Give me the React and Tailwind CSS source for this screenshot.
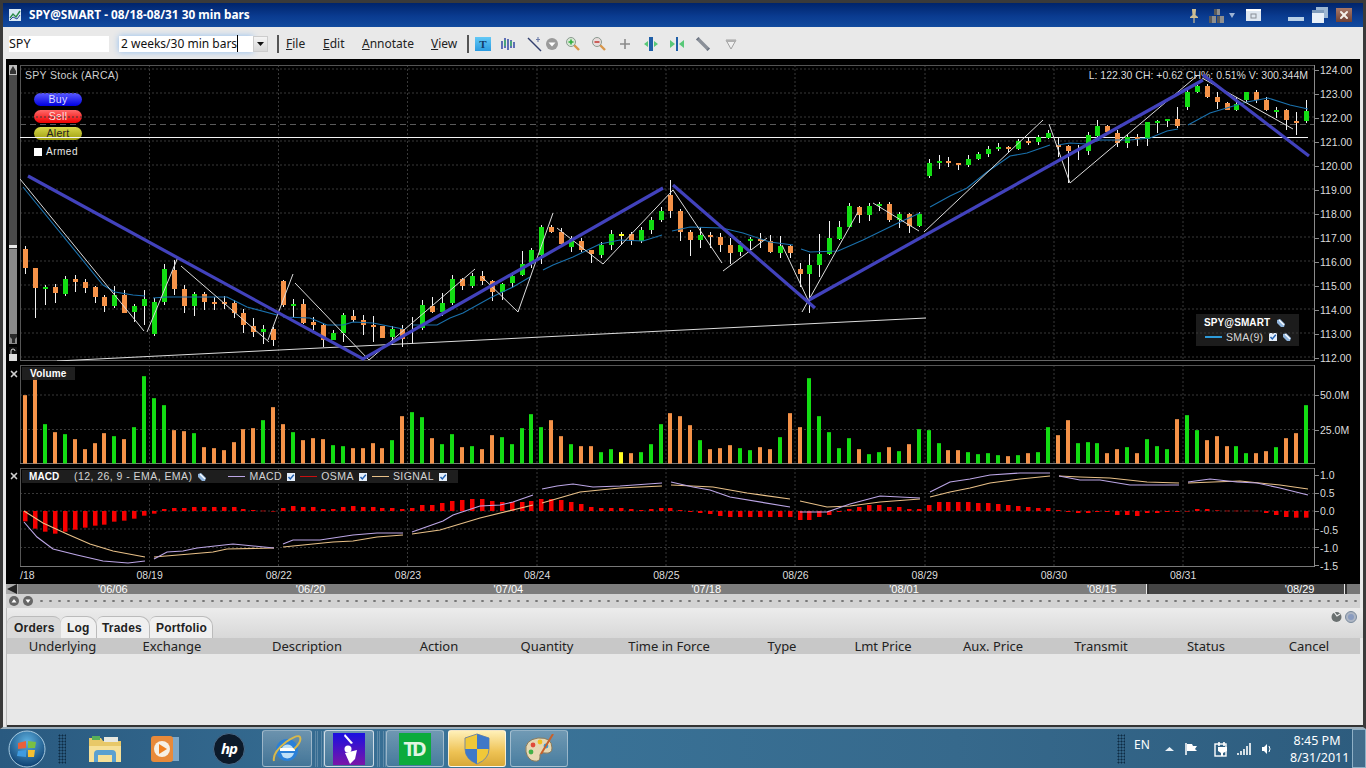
import React from "react";
import { X } from "lucide-react";

const G = "#13dd13", O = "#f59248", Y = "#ffff22";
const c = { g: G, o: O, y: Y };
const cx = (i) => Math.round(25 + 9.93 * i);
const days = [149.5, 278.5, 407.5, 537, 666, 795, 925, 1054, 1183];

const candles = [
[246,274,249,268,"o"],[268,318,268,288,"o"],[285,305,287,289,"g"],[284,303,287,293,"o"],[276,296,279,294,"g"],[275,292,279,282,"o"],[279,293,282,288,"o"],[286,303,287,297,"o"],[295,312,297,306,"o"],[286,308,295,306,"g"],[290,313,295,313,"o"],[304,322,306,312,"g"],[290,325,299,306,"g"],
[298,336,302,334,"g"],[264,305,269,302,"g"],[260,295,270,289,"o"],[285,313,289,306,"o"],[292,316,294,306,"g"],[292,310,294,302,"o"],[297,310,302,304,"o"],[296,309,302,304,"o"],[300,318,303,313,"o"],[309,333,313,325,"o"],[318,337,326,332,"o"],[325,344,329,332,"g"],[327,346,329,340,"o"],
[280,307,281,305,"o"],[299,317,304,306,"g"],[299,324,304,323,"o"],[317,330,322,325,"o"],[323,347,325,340,"o"],[330,340,333,340,"g"],[313,342,315,333,"g"],[310,322,316,320,"o"],[315,335,320,325,"o"],[316,342,325,327,"o"],[326,338,326,338,"o"],[326,345,329,337,"g"],[325,347,329,339,"o"],
[317,344,330,330,"g"],[300,330,305,328,"g"],[297,313,306,312,"o"],[293,316,303,312,"g"],[275,305,279,303,"g"],[278,290,279,286,"o"],[273,288,276,286,"g"],[271,285,276,281,"o"],[280,301,281,292,"o"],[283,300,284,292,"g"],[272,287,276,283,"g"],[251,276,264,275,"g"],[248,268,250,264,"g"],
[225,264,227,255,"g"],[225,233,227,232,"o"],[228,247,232,244,"o"],[236,252,239,247,"g"],[238,252,241,250,"o"],[250,263,250,254,"o"],[242,258,245,255,"g"],[230,250,234,245,"g"],[232,245,234,236,"y"],[232,245,234,241,"o"],[227,243,230,241,"g"],[217,234,220,230,"g"],[207,222,211,220,"g"],
[180,218,195,211,"o"],[209,241,211,232,"o"],[230,256,232,240,"o"],[227,248,235,240,"g"],[232,248,235,237,"o"],[233,252,237,245,"o"],[238,264,245,253,"o"],[241,256,245,252,"g"],[237,250,239,241,"g"],[233,248,239,241,"o"],[235,253,241,252,"o"],[236,258,246,253,"g"],[245,258,246,253,"o"],
[263,287,269,274,"o"],[254,313,265,274,"g"],[234,277,254,265,"g"],[221,255,238,254,"g"],[221,240,227,239,"g"],[203,227,206,227,"g"],[206,223,207,215,"o"],[203,221,206,215,"g"],[202,211,204,206,"g"],[202,222,204,220,"o"],[212,228,214,220,"g"],[213,233,214,226,"o"],[212,227,214,226,"g"],
[159,178,163,176,"g"],[155,169,161,163,"g"],[157,167,161,163,"o"],[163,170,163,165,"o"],[155,167,159,165,"g"],[152,160,154,159,"g"],[146,157,149,154,"g"],[143,151,147,149,"g"],[146,153,147,149,"o"],[139,150,141,149,"g"],[137,145,141,143,"o"],[135,145,137,142,"g"],[130,139,133,138,"g"],
[137,157,145,147,"o"],[145,183,146,151,"o"],[145,160,152,152,"g"],[132,155,135,151,"g"],[120,138,126,136,"g"],[125,133,126,132,"o"],[130,147,133,143,"o"],[135,148,137,143,"g"],[134,146,137,139,"o"],[122,146,122,139,"g"],[120,133,121,123,"g"],[119,127,119,121,"g"],[107,128,119,126,"o"],
[88,110,92,107,"g"],[85,93,86,92,"g"],[84,98,86,97,"o"],[92,109,97,102,"o"],[102,110,103,110,"o"],[97,111,104,110,"g"],[92,102,92,100,"g"],[90,103,92,100,"o"],[97,111,100,110,"o"],[107,118,110,112,"g"],[109,130,110,120,"o"],[112,135,121,123,"o"],[100,123,111,121,"g"],
];

const volumes = [
[105,"o"],[30,"o"],[192,"g"],[216,"o"],[222,"g"],[237,"o"],[267,"o"],[249,"o"],[219,"o"],[228,"g"],[237,"o"],[201,"g"],[48,"g"],
[114,"g"],[135,"g"],[210,"o"],[213,"o"],[219,"g"],[261,"o"],[264,"o"],[270,"o"],[246,"o"],[207,"o"],[204,"o"],[180,"g"],[141,"o"],
[192,"o"],[216,"g"],[240,"o"],[234,"o"],[237,"o"],[255,"g"],[258,"g"],[264,"o"],[264,"o"],[249,"o"],[264,"o"],[240,"g"],[168,"o"],
[156,"g"],[171,"g"],[234,"o"],[252,"g"],[222,"g"],[261,"o"],[258,"g"],[267,"o"],[225,"o"],[231,"g"],[252,"g"],[204,"g"],[162,"g"],
[201,"g"],[180,"o"],[228,"o"],[252,"g"],[258,"o"],[258,"o"],[276,"g"],[267,"g"],[276,"y"],[279,"o"],[276,"g"],[252,"g"],[192,"g"],
[159,"o"],[168,"o"],[195,"o"],[240,"g"],[267,"o"],[264,"o"],[255,"o"],[264,"g"],[270,"g"],[261,"o"],[267,"o"],[231,"g"],[159,"o"],
[201,"o"],[54,"g"],[168,"g"],[216,"g"],[264,"g"],[234,"g"],[267,"o"],[282,"g"],[276,"g"],[261,"o"],[273,"g"],[252,"o"],[207,"g"],
[210,"g"],[249,"g"],[270,"o"],[270,"o"],[276,"g"],[282,"g"],[279,"g"],[285,"g"],[288,"o"],[285,"g"],[279,"o"],[276,"g"],[201,"g"],
[225,"o"],[180,"o"],[249,"g"],[246,"g"],[249,"g"],[279,"o"],[267,"o"],[261,"g"],[279,"o"],[237,"g"],[258,"g"],[267,"g"],[177,"o"],
[165,"g"],[210,"g"],[240,"o"],[228,"o"],[258,"o"],[258,"g"],[279,"g"],[279,"o"],[273,"o"],[261,"g"],[234,"o"],[219,"o"],[135,"g"],
];

const osma = [
-31,-53,-62,-68,-62,-56,-50,-44,-41,-32,-29,-23,-14,
-8,6,9,9,12,12,12,12,12,6,3,1,-1,
9,15,12,12,6,6,12,15,12,12,9,9,6,
9,18,18,24,30,33,36,36,30,27,27,27,30,
36,36,33,27,21,12,9,9,9,6,3,6,9,
9,3,-3,-6,-9,-15,-18,-18,-18,-18,-18,-18,-18,
-27,-27,-18,-12,-3,6,12,18,18,12,12,6,6,
18,27,27,27,27,24,24,21,18,15,12,9,9,
3,-3,-6,-6,-3,-3,-12,-12,-15,-6,-6,-3,-3,
0,6,6,2,1,1,1,1,-6,-12,-18,-20,-20,
];

const sma = [
"23,187 103,285 115,292 133,295 145,296",
"153,298 167,297 187,297 227,297 247,307 277,315",
"283,317 310,318 327,325 343,325 353,322 373,323 403,329",
"413,325 437,325 450,318 463,313 490,298 513,287 530,277",
"543,270 553,265 573,257 600,244 620,240 643,241 662,235",
"672,231 690,227 722,228 743,233 770,242 793,245",
"801,249 810,252 838,251 863,240 900,222 920,213",
"930,207 950,196 967,188 987,172 1010,156 1027,153 1050,145",
"1058,145 1070,143 1087,144 1100,140 1130,140 1150,138 1167,131 1178,129",
"1188,125 1210,113 1230,107 1247,102 1268,98 1290,105 1308,109",
];

const zig = [
"20,179 144,331","147,332 178,257","181,266 269,342","268,340 293,274","295,283 369,360 475,269",
"482,277 518,312 553,213","557,228 603,264 673,190 722,263","723,271 767,238","782,245 808,300","802,312 858,212",
"873,203 919,231","924,232 1043,120","1049,124 1070,183 1198,75","1202,78 1293,129","57,361 926,318",
];

const thick = ["28,176 363,359 663,188", "673,185 815,308", "809,300 1203,80", "1203,75 1309,156"];

const macd = [
"24,522 37,537 53,549 77,555 103,561 128,563 145,561",
"154,559 167,552 183,551 197,548 233,544 274,548",
"283,544 293,540 320,540 353,535 377,533 403,533",
"412,532 443,521 453,515 480,506 500,505 513,502 533,495",
"542,489 557,486 573,484 593,487 620,486 662,483",
"671,482 693,487 710,490 730,497 790,507",
"800,512 827,512 850,504 880,496 920,498",
"930,492 950,482 970,479 990,475 1020,473 1050,473",
"1059,476 1080,480 1100,480 1130,485 1179,485",
"1188,482 1210,479 1237,482 1257,483 1280,488 1308,495",
];
const signal = [
"24,511 43,523 67,534 90,544 113,551 145,557",
"154,557 190,554 213,552 227,549 274,548",
"283,547 333,542 353,541 377,537 403,535",
"412,534 440,530 480,518 533,505",
"542,503 580,492 620,488 662,486",
"671,485 713,487 747,493 790,499",
"800,501 827,507 850,506 880,502 920,499",
"930,497 950,492 970,488 990,483 1020,479 1050,476",
"1059,476 1080,477 1110,478 1147,482 1179,483",
"1188,483 1213,482 1240,481 1280,485 1308,489",
];

function Grid({ ys, y0, y1 }) {
  return (
    <>
      {ys.map((y) => <line key={y} x1="20" x2="1314" y1={y} y2={y} stroke="#383838" strokeDasharray="2 2" />)}
      {days.map((x) => <line key={x} x1={x} x2={x} y1={y0} y2={y1} stroke="#383838" strokeDasharray="2 2" />)}
    </>
  );
}

function Tick({ children }) {
  return (
    <div className="flex items-center h-[12px] text-[10.5px] leading-[12px] text-[#dcdcdc]">
      <span className="w-[4px] h-px bg-[#8a8a8a] mr-[1px]" />
      <span>{children}</span>
    </div>
  );
}

function Wrench({ className = "" }) {
  return (
    <svg width="10" height="10" viewBox="0 0 10 10" className={className}>
      <path d="M1 2 L4 1 L9 6 L8 9 L5 9 L1 5 Z" fill="#8fb4dc" />
      <path d="M3 2 L8 7" stroke="#fff" strokeWidth="1.2" />
    </svg>
  );
}

function Check({ className = "" }) {
  return (
    <svg width="8" height="8" viewBox="0 0 8 8" className={className}>
      <rect width="8" height="8" fill="#e4eefa" />
      <path d="M1.5 4 L3.3 6 L6.8 1.8" stroke="#1f5fb0" strokeWidth="1.4" fill="none" />
    </svg>
  );
}

function PriceChart() {
  return (
    <svg width="1294" height="296" viewBox="20 65 1294 296" className="relative block">
      <Grid ys={[69,93,117,141,165,189,213,237,261,285,309,333,357]} y0={65} y1={361} />
      <line x1="20" x2="1314" y1="65.5" y2="65.5" stroke="#555" />
      <line x1="20.5" x2="20.5" y1="65" y2="361" stroke="#555" />
      <line x1="20" x2="1314" y1="360.5" y2="360.5" stroke="#666" />
      <line x1="20" x2="1314" y1="124.5" y2="124.5" stroke="#5a5a5a" strokeDasharray="6 4" />
      <line x1="20" x2="1308" y1="137.5" y2="137.5" stroke="#f4f4f4" />
      {candles.map(([t, b, bt, bb, col], i) => (
        <g key={i}>
          <rect x={cx(i)} y={t} width="1" height={b - t} fill="#f2f2f2" />
          <rect x={cx(i) - 2} y={bt} width="5" height={Math.max(bb - bt, 0)} fill={c[col]} />
        </g>
      ))}
      {sma.map((p, i) => <polyline key={i} points={p} fill="none" stroke="#1a71ad" strokeWidth="1.1" />)}
      {zig.map((p, i) => <polyline key={i} points={p} fill="none" stroke="#dcdcdc" strokeWidth="1" />)}
      {thick.map((p, i) => <polyline key={i} points={p} fill="none" stroke="#4242bc" strokeWidth="3.2" />)}
    </svg>
  );
}

function VolumeChart() {
  return (
    <svg width="1294" height="99" viewBox="20 365 1294 99" className="block">
      <Grid ys={[395, 429.5]} y0={365} y1={464} />
      <line x1="20" x2="1314" y1="365.5" y2="365.5" stroke="#555" />
      <line x1="20.5" x2="20.5" y1="365" y2="464" stroke="#555" />
      <line x1="20" x2="1314" y1="463.5" y2="463.5" stroke="#777" />
      {volumes.map(([top, col], i) => {
        const h = (310 - top) / 3;
        return <rect key={i} x={cx(i) - 2} y={463.5 - h} width="4" height={h} fill={c[col]} />;
      })}
    </svg>
  );
}

function MacdChart() {
  return (
    <svg width="1294" height="99" viewBox="20 468 1294 99" className="block">
      <Grid ys={[493.5, 511, 529, 547.5]} y0={468} y1={567} />
      <line x1="20" x2="1314" y1="468.5" y2="468.5" stroke="#555" />
      <line x1="20.5" x2="20.5" y1="468" y2="567" stroke="#555" />
      <line x1="20" x2="1314" y1="566.5" y2="566.5" stroke="#777" />
      {osma.map((v, i) => {
        const h = Math.abs(v) / 3;
        return <rect key={i} x={cx(i) - 2} y={v > 0 ? 511 - h : 511} width="4.5" height={Math.max(h, 0.6)} fill="#f60000" />;
      })}
      {signal.map((p, i) => <polyline key={i} points={p} fill="none" stroke="#e8c088" strokeWidth="1.1" />)}
      {macd.map((p, i) => <polyline key={i} points={p} fill="none" stroke="#bca6e6" strokeWidth="1.1" />)}
    </svg>
  );
}

function Pill({ children, className }) {
  return (
    <div className={`w-[48px] h-[13px] rounded-full text-center text-[10.5px] leading-[13px] tracking-[0.3px] ${className}`}>
      {children}
    </div>
  );
}

function ToolIcons() {
  return (
    <>
      <span className="ml-[6px] w-[16px] h-[14px] bg-[linear-gradient(to_bottom,#62c8f6,#2b9be0)] text-center text-[11px] leading-[14px] font-bold text-[#123a66] font-['Liberation_Serif',serif]">T</span>
      <svg width="16" height="16" viewBox="0 0 16 16" className="ml-[9px]">
        <path d="M2 5V13M5 2V12M8 3V14M11 4V12M14 6V12" stroke="#3d52a8" strokeWidth="1.6" />
        <path d="M5 4V10M11 5V10" stroke="#45b070" strokeWidth="1.6" />
      </svg>
      <svg width="16" height="16" viewBox="0 0 16 16" className="ml-[11px]">
        <path d="M1 2L14 15" stroke="#33406e" strokeWidth="1.4" />
        <path d="M11 1V6M9 3.5H13" stroke="#6a7aa8" strokeWidth="1.1" />
      </svg>
      <svg width="14" height="14" viewBox="0 0 14 14" className="ml-[2px]">
        <circle cx="7" cy="7" r="6" fill="#9a9a9a" />
        <path d="M3.5 5.5H10.5L7 9.5Z" fill="#fff" />
      </svg>
      <svg width="16" height="16" viewBox="0 0 16 16" className="ml-[6px]">
        <path d="M9 9L14 14" stroke="#d8964a" strokeWidth="2.4" />
        <circle cx="6" cy="6" r="4.5" fill="#d8e8d4" stroke="#8a9a90" />
        <path d="M3.5 6H8.5M6 3.5V8.5" stroke="#2fae3f" strokeWidth="1.6" />
      </svg>
      <svg width="16" height="16" viewBox="0 0 16 16" className="ml-[10px]">
        <path d="M9 9L14 14" stroke="#d8964a" strokeWidth="2.4" />
        <circle cx="6" cy="6" r="4.5" fill="#e8dcdc" stroke="#8a9a90" />
        <path d="M3.5 6H8.5" stroke="#c8504a" strokeWidth="1.8" />
      </svg>
      <svg width="16" height="16" viewBox="0 0 16 16" className="ml-[10px]">
        <path d="M8 3V13M3 8H13" stroke="#8a8a8a" strokeWidth="1.6" />
      </svg>
      <svg width="16" height="16" viewBox="0 0 16 16" className="ml-[10px]">
        <rect x="6" y="1" width="4" height="14" fill="#1f5fa8" />
        <path d="M5 5L1 8L5 11ZM11 5L15 8L11 11Z" fill="#58c878" />
      </svg>
      <svg width="16" height="16" viewBox="0 0 16 16" className="ml-[10px]">
        <rect x="7" y="1" width="2" height="14" fill="#1f5fa8" />
        <path d="M1 4L6 8L1 12ZM15 4L10 8L15 12Z" fill="#58c878" />
      </svg>
      <svg width="16" height="16" viewBox="0 0 16 16" className="ml-[10px]">
        <path d="M3 3L13 13" stroke="#8a8f98" strokeWidth="3.4" />
        <path d="M1.5 4L4 1.5M12 14.5L14.5 12" stroke="#6a7280" strokeWidth="1.6" />
      </svg>
      <svg width="16" height="16" viewBox="0 0 16 16" className="ml-[12px]">
        <path d="M3 4H13L8 13Z" fill="#f0f0f0" stroke="#a0a0a0" />
        <path d="M3 4H13V6H3Z" fill="#b0b0b0" />
      </svg>
    </>
  );
}

function TitleIcons() {
  return (
    <div className="ml-auto flex items-center pr-[11px]">
      <svg width="10" height="15" viewBox="0 0 10 15">
        <path d="M3 1H7V2L6.5 7L9 9V10H1V9L3.5 7L3 2Z" fill="#cdbd93" />
        <path d="M5 10V15" stroke="#cdbd93" strokeWidth="1.2" />
      </svg>
      <svg width="16" height="15" viewBox="0 0 16 15" className="ml-[10px]">
        <path d="M5 1H11V7H5ZM0 8H7V15H0ZM8 8H15V15H8Z" fill="#8f8f8f" />
        <path d="M5 1H8V7H5ZM0 8H3V15H0ZM8 8H11V15H8Z" fill="#5a5a5a" />
      </svg>
      <svg width="6" height="5" viewBox="0 0 6 5" className="ml-[4px]"><path d="M0 0H6L3 5Z" fill="#9db3d4" /></svg>
      <svg width="15" height="12" viewBox="0 0 15 12" className="ml-[11px]">
        <rect width="15" height="12" fill="#dfe7f0" />
        <rect x="0" y="0" width="15" height="2" fill="#fff" />
        <rect x="5" y="5" width="5" height="4" fill="none" stroke="#8a8f96" />
      </svg>
      <span className="ml-[27px] mt-[7px] w-[16px] h-[4px] bg-[#b8cfe6]" />
      <svg width="16" height="16" viewBox="0 0 16 16" className="ml-[8px]">
        <rect x="4" y="0" width="12" height="11" fill="#9cb6d2" />
        <rect x="0" y="3" width="12" height="13" fill="#e8f0f8" />
        <rect x="0" y="3" width="12" height="3" fill="#7f9cbc" />
      </svg>
      <div className="ml-[8px] w-[16px] h-[14px] flex items-center justify-center bg-[linear-gradient(to_bottom,#a87868,#6e4034)]">
        <X size={12} strokeWidth={4} color="#f4efe8" />
      </div>
    </div>
  );
}

function TaskButton({ className = "", children }) {
  return (
    <div className={`h-[37px] flex items-center justify-center rounded-[3px] border border-white/40 bg-[linear-gradient(to_bottom,rgba(255,255,255,0.28),rgba(255,255,255,0.08))] ${className}`}>
      {children}
    </div>
  );
}

function Gripper({ className = "" }) {
  return <div className={`w-[8px] h-[30px] bg-[radial-gradient(circle,#0d2b44_0.8px,transparent_1.2px)] bg-[length:3px_3px] ${className}`} />;
}

function Taskbar() {
  return (
    <div className="h-[39px] flex items-center bg-[linear-gradient(to_right,#2a5a80,#3a7499_35%,#36698c_70%,#2d5c7e)] text-white font-['Noto_Sans',sans-serif]">
      <svg width="38" height="38" viewBox="0 0 38 38" className="ml-[8px]">
        <defs>
          <radialGradient id="orb" cx="50%" cy="30%" r="70%">
            <stop offset="0" stopColor="#5cb0e0" />
            <stop offset="1" stopColor="#0d3f70" />
          </radialGradient>
        </defs>
        <circle cx="19" cy="19" r="18" fill="url(#orb)" stroke="#a8cbe0" strokeWidth="1" />
        <path d="M10 13 L18 11 L18 18 L10 19Z" fill="#e8603a" />
        <path d="M20 11 L28 12 L27 18 L20 18Z" fill="#7ac043" />
        <path d="M10 21 L18 20 L18 27 L9 26Z" fill="#3f9be0" />
        <path d="M20 20 L27 20 L26 27 L20 27Z" fill="#f6c030" />
      </svg>
      <Gripper className="ml-[12px]" />
      <svg width="34" height="30" viewBox="0 0 34 30" className="ml-[22px]">
        <path d="M1 4H13L15 7H33V28H1Z" fill="#e8c868" />
        <rect x="4" y="2" width="8" height="4" fill="#58b058" />
        <rect x="16" y="3" width="14" height="5" fill="#e8e8e0" />
        <path d="M1 12H33V28H1Z" fill="#f6e098" />
        <path d="M6 28V20Q6 16 10 16H24Q28 16 28 20V28H24V21H10V28Z" fill="#5aa0d0" />
      </svg>
      <svg width="28" height="28" viewBox="0 0 28 28" className="ml-[29px]">
        <rect x="4" y="2" width="24" height="24" fill="#7ea8c8" />
        <rect x="0" y="1" width="22" height="26" rx="3" fill="#e88a3a" />
        <circle cx="11" cy="14" r="8" fill="#f6f0e4" />
        <path d="M8 9L16 14L8 19Z" fill="#ef8020" />
      </svg>
      <div className="ml-[34px] w-[32px] h-[32px] rounded-full bg-[#0c1a2a] flex items-center justify-center text-[15px] italic font-bold tracking-[-1px] border border-[#4a6a88]">hp</div>
      <TaskButton className="ml-[17px] w-[50px]">
        <svg width="34" height="32" viewBox="0 0 34 32" className="shrink-0">
          <circle cx="17" cy="17" r="11" fill="#2a80d8" />
          <rect x="10" y="15" width="15" height="3" fill="#fff" />
          <path d="M12 15A6 6 0 0 1 23 15ZM11 20H24A7 7 0 0 1 13 24" fill="#bfe0f8" />
          <path d="M4 28Q2 20 16 9Q28 1 30 4Q32 9 24 16" fill="none" stroke="#d8b84a" strokeWidth="2" />
        </svg>
      </TaskButton>
      <div className="ml-[3px] w-[3px] h-[36px] border-x border-white/20" />
      <div className="ml-[3px] w-[3px] h-[36px] border-x border-white/20" />
      <TaskButton className="w-[50px] border-white/70">
        <svg width="32" height="32" viewBox="0 0 32 32">
          <defs>
            <linearGradient id="pu" x1="0" y1="0" x2="0" y2="1">
              <stop offset="0" stopColor="#1a10e0" />
              <stop offset="1" stopColor="#7a16a8" />
            </linearGradient>
          </defs>
          <rect width="32" height="32" fill="url(#pu)" />
          <path d="M12 1L20 10L18 11L11 3Z" fill="#fff" />
          <circle cx="15" cy="16" r="3.5" fill="#fff" />
          <path d="M12 20L24 17L22 26L17 31Z" fill="#fff" />
        </svg>
      </TaskButton>
      <div className="ml-[3px] w-[3px] h-[36px] border-x border-white/20" />
      <div className="ml-[3px] w-[3px] h-[36px] border-x border-white/20" />
      <TaskButton className="w-[58px]">
        <div className="w-[32px] h-[32px] bg-[#0bab3c] flex items-center justify-center text-[20px] font-bold tracking-[-3px] text-[#dff5e2] pr-[3px]">TD</div>
      </TaskButton>
      <div className="ml-[4px] w-[58px] h-[37px] rounded-[3px] border border-white/70 bg-[linear-gradient(to_bottom,#fff0b8,#eec254_60%,#d8a838)] flex items-center justify-center">
        <svg width="28" height="32" viewBox="0 0 28 32">
          <path d="M14 1 L26 5 V16 Q26 26 14 31 Q2 26 2 16 V5Z" fill="#f0c838" stroke="#7a8a9a" />
          <path d="M14 1 L26 5 V16 H14Z" fill="#3f78c8" />
          <path d="M14 16 H2 Q2 26 14 31Z" fill="#3f78c8" />
        </svg>
      </div>
      <TaskButton className="ml-[4px] w-[58px]">
        <svg width="32" height="30" viewBox="0 0 32 30">
          <path d="M3 18 Q1 6 15 4 Q29 3 29 14 Q29 20 22 19 Q16 18 17 23 Q17 28 11 27 Q5 26 3 18Z" fill="#e6d8b4" stroke="#8a7a5a" />
          <circle cx="10" cy="11" r="2.4" fill="#e04a3a" />
          <circle cx="17" cy="8" r="2.4" fill="#f0c020" />
          <circle cx="23" cy="12" r="2.4" fill="#30a0e0" />
          <circle cx="8" cy="18" r="2.4" fill="#40b048" />
          <path d="M30 0 L18 20" stroke="#c8602a" strokeWidth="2" />
        </svg>
      </TaskButton>
      <Gripper className="ml-auto" />
      <span className="ml-[9px] w-[14px] text-[12px] leading-none -mt-[7px]">EN</span>
      <svg width="9" height="6" viewBox="0 0 9 6" className="ml-[17px]"><path d="M0 5L4.5 1L9 5Z" fill="#e8f0f6" /></svg>
      <svg width="14" height="14" viewBox="0 0 14 14" className="ml-[10px]">
        <path d="M2 1V13" stroke="#fff" strokeWidth="1.5" />
        <path d="M3 2H8L9 4H13L11 7L13 9H3Z" fill="#fff" />
      </svg>
      <svg width="14" height="16" viewBox="0 0 14 16" className="ml-[16px]">
        <rect x="1" y="3" width="11" height="12" fill="none" stroke="#fff" strokeWidth="1.4" />
        <path d="M5 1V5M10 1V5" stroke="#fff" strokeWidth="1.6" />
        <path d="M4 6H13V10L9 12V15H7V12L4 10Z" fill="#fff" />
      </svg>
      <svg width="14" height="12" viewBox="0 0 14 12" className="ml-[9px]">
        <path d="M1 10V12M4 8V12M7 6V12M10 3V12M13 0V12" stroke="#fff" strokeWidth="1.6" />
      </svg>
      <svg width="12" height="14" viewBox="0 0 12 14" className="ml-[10px]">
        <path d="M1 5H3L6 2V12L3 9H1Z" fill="#fff" />
        <path d="M8 4Q10 7 8 10" stroke="#fff" fill="none" />
      </svg>
      <div className="ml-[17px] w-[54px] text-center text-[12.5px] leading-[17px] whitespace-nowrap">
        <div>8:45 PM</div>
        <div>8/31/2011</div>
      </div>
      <div className="ml-[8px] w-[14px] h-[39px] border border-[#8fb0c6] bg-white/10" />
    </div>
  );
}

export default function App() {
  const headers = [
    ["Underlying", "w-[111px]"], ["Exchange", "w-[108px]"], ["Description", "w-[162px]"], ["Action", "w-[102px]"],
    ["Quantity", "w-[114px]"], ["Time in Force", "w-[130px]"], ["Type", "w-[96px]"], ["Lmt Price", "w-[106px]"],
    ["Aux. Price", "w-[114px]"], ["Transmit", "w-[102px]"], ["Status", "w-[108px]"], ["Cancel", "w-[98px]"],
  ];
  return (
    <div className="w-[1366px] h-[768px] overflow-hidden flex flex-col bg-[#333] font-['Noto_Sans',sans-serif]">
      <div className="h-[729px] flex flex-col border-t-[3px] border-x-[3px] border-[#3a3a3a] border-b-[2px] border-b-[#9fb0bc]">
        <div className="h-[24px] shrink-0 flex items-center bg-[linear-gradient(to_bottom,#00246b,#0a3b90_55%,#124a9e)]">
          <svg width="12" height="12" viewBox="0 0 12 12" className="ml-[6px]">
            <rect width="12" height="12" fill="#d8e8f4" />
            <path d="M1 9L4 5L7 8L11 2" stroke="#2a8a4a" strokeWidth="1.4" fill="none" />
            <path d="M1 11L4 8L8 10L11 6" stroke="#2a4a9a" fill="none" />
          </svg>
          <span className="ml-[8px] text-[11.8px] font-bold text-white whitespace-nowrap">SPY@SMART - 08/18-08/31 30 min bars</span>
          <TitleIcons />
        </div>

        <div className="h-[32px] shrink-0 flex items-center pt-[2px] bg-[#e9e9e9] text-[12px] text-[#222]">
          <div className="ml-[6px] w-[100px] h-[16px] bg-white text-[12.5px] leading-[16px] text-[#111]">SPY</div>
          <div className="ml-[10px] w-[134px] h-[16px] bg-white shadow-[0_0_6px_#8fbdf0] text-[12px] leading-[16px] pl-[2px] text-[#111] whitespace-nowrap">
            <span className="border-r border-black">2 weeks/30 min bars</span>
          </div>
          <div className="w-[15px] h-[16px] bg-[linear-gradient(to_bottom,#f4f4f4,#d8d8d8)] border border-[#ccc] flex items-center justify-center">
            <svg width="7" height="4" viewBox="0 0 7 4"><path d="M0 0H7L3.5 4Z" fill="#111" /></svg>
          </div>
          <span className="ml-[9px] w-[2px] h-[18px] bg-[#555]" />
          <span className="ml-[7px] w-[37px]"><u>F</u>ile</span>
          <span className="w-[39px]"><u>E</u>dit</span>
          <span className="w-[69px]"><u>A</u>nnotate</span>
          <span className="w-[36px]"><u>V</u>iew</span>
          <span className="w-[2px] h-[18px] bg-[#555]" />
          <ToolIcons />
        </div>

        <div className="pl-[3px] bg-[#e9e9e9] shrink-0">
          <div className="w-[1354px] h-[525px] bg-black flex flex-col font-['Liberation_Sans',sans-serif]">
            <div className="h-[306px] flex shrink-0">
              <div className="w-[14px] mt-[6px] h-[296px] flex">
                <div className="ml-[3px] w-[8px] h-full flex flex-col">
                  <div className="h-[10px] bg-[#bdbdbd] flex items-center justify-center">
                    <svg width="6" height="8" viewBox="0 0 6 8"><path d="M3 0L6 5V8H0V5Z" fill="#333" /></svg>
                  </div>
                  <div className="h-[170px] bg-[#4a4a4a]" />
                  <div className="h-[4px] bg-[#e8e8e8] border-b border-[#333]" />
                  <div className="h-[84px] bg-[#8a8a8a]" />
                  <div className="h-[11px] bg-[#8a8a8a] flex items-center justify-center">
                    <svg width="7" height="9" viewBox="0 0 7 9"><path d="M0 0H7V3L5 5V9H2V5L0 3Z" fill="#2a2a2a" /></svg>
                  </div>
                  <div className="mt-[3px] h-[14px] bg-[#111] flex items-center justify-center">
                    <svg width="8" height="13" viewBox="0 0 8 13">
                      <path d="M2 6V3Q2 1 4 1Q6 1 6 3" fill="none" stroke="#ddd" />
                      <rect x="0" y="6" width="8" height="7" fill="#ddd" />
                    </svg>
                  </div>
                </div>
              </div>
              <div className="relative mt-[6px] w-[1294px] h-[296px]">
                <div className="absolute left-[5px] top-[4px] text-[10.5px] leading-[12px] tracking-[0.3px] text-[#d0d0d0]">SPY Stock (ARCA)</div>
                <div className="absolute left-[14px] top-[28px] flex flex-col gap-[4px]">
                  <Pill className="bg-[linear-gradient(to_bottom,#5a5aff,#0000e0)] text-[#dcdcff]">Buy</Pill>
                  <Pill className="bg-[linear-gradient(to_bottom,#ff6a6a,#f00000)] text-[#ffe0e0]">Sell</Pill>
                  <Pill className="bg-[linear-gradient(to_bottom,#d8d84a,#9e9e10)] text-[#222]">Alert</Pill>
                </div>
                <div className="absolute left-[14px] top-[81px] flex items-center">
                  <span className="w-[8px] h-[8px] bg-white" />
                  <span className="ml-[4px] text-[10px] leading-[12px] tracking-[0.5px] text-[#e8e8e8]">Armed</span>
                </div>
                <div className="absolute right-[6px] top-[4px] text-[10.5px] leading-[12px] text-[#dcdcdc] whitespace-nowrap">L: 122.30 CH: +0.62 CH%: 0.51% V: 300.344M</div>
                <div className="absolute left-[1176px] top-[249px] w-[103px] h-[32px] bg-[#1c1c1c] flex flex-col justify-center pl-[8px] text-[10.5px] leading-[14px] tracking-[0.3px] text-[#d8d8d8]">
                  <div className="flex items-center"><b className="text-white text-[10px] tracking-[0.1px]">SPY@SMART</b><Wrench className="ml-[6px]" /></div>
                  <div className="flex items-center">
                    <span className="w-[17px] h-[1.5px] bg-[#2d9ad8] ml-[1px]" />
                    <span className="ml-[4px]">SMA(9)</span>
                    <Check className="ml-[6px]" />
                    <Wrench className="ml-[5px]" />
                  </div>
                </div>
                <PriceChart />
              </div>
              <div className="w-[46px] mt-[6px] h-[296px] border-l border-[#8a8a8a]">
                <div className="flex flex-col justify-between h-[300px] -mt-[1px]">
                  {["124.00","123.00","122.00","121.00","120.00","119.00","118.00","117.00","116.00","115.00","114.00","113.00","112.00"].map((t) => <Tick key={t}>{t}</Tick>)}
                </div>
              </div>
            </div>

            <div className="h-[101px] flex shrink-0">
              <div className="w-[14px] h-[18px] flex items-center justify-center pl-[1px]"><X size={10} strokeWidth={4} color="#cfcfcf" /></div>
              <div className="relative w-[1294px] h-[99px]">
                <VolumeChart />
                <div className="absolute left-[2px] top-[2px] w-[53px] h-[13px] bg-[#222]/90 pl-[8px] text-[10px] leading-[13px] font-bold tracking-[0.2px] text-white">Volume</div>
              </div>
              <div className="w-[46px] h-[99px] border-l border-[#8a8a8a] pt-[24px] flex flex-col gap-[23px]">
                <Tick>50.0M</Tick>
                <Tick>25.0M</Tick>
              </div>
            </div>

            <div className="h-[101px] flex shrink-0 pt-[2px]">
              <div className="w-[14px] h-[16px] flex items-center justify-center pl-[1px]"><X size={10} strokeWidth={4} color="#cfcfcf" /></div>
              <div className="relative w-[1294px] h-[99px]">
                <MacdChart />
                <div className="absolute left-[2px] top-[2px] w-[436px] h-[13px] bg-[#1e1e1e] flex items-center pl-[7px] text-[10.5px] leading-[13px] tracking-[0.45px] text-[#d4d4d4] whitespace-nowrap">
                  <b className="text-white w-[45px] text-[10px] tracking-[0.1px]">MACD</b>
                  <span>(12, 26, 9 - EMA, EMA)</span>
                  <Wrench className="ml-[5px]" />
                  <span className="ml-[21px] w-[17px] h-[1.5px] bg-[#bca6e6]" />
                  <span className="ml-[4px]">MACD</span>
                  <Check className="ml-[5px]" />
                  <span className="ml-[5px] w-[17px] h-[1.5px] bg-[#c81010]" />
                  <span className="ml-[4px]">OSMA</span>
                  <Check className="ml-[5px]" />
                  <span className="ml-[5px] w-[17px] h-[1.5px] bg-[#e8c088]" />
                  <span className="ml-[4px]">SIGNAL</span>
                  <Check className="ml-[5px]" />
                </div>
              </div>
              <div className="w-[46px] h-[99px] border-l border-[#8a8a8a]">
                <div className="flex flex-col justify-between h-[103px] mt-[1px]">
                  {["1.0","0.5","0.0","-0.5","-1.0","-1.5"].map((t) => <Tick key={t}>{t}</Tick>)}
                </div>
              </div>
            </div>

            <div className="h-[17px] flex shrink-0 pl-[14px] items-center text-[10.5px] text-[#dcdcdc]">
              <span className="w-[65px]">/18</span>
              {["08/19","08/22","08/23","08/24","08/25","08/26","08/29","08/30","08/31"].map((t) => (
                <span key={t} className="w-[129.2px] text-center">{t}</span>
              ))}
            </div>
          </div>
        </div>

        <div className="flex-1 flex flex-col bg-[#e8e8e8] pl-[3px]">
          <div className="w-[1354px] h-[10px] shrink-0 flex items-center bg-[linear-gradient(to_right,#7c7c7c_0,#7c7c7c_1140px,#e8e8e8_1140px,#e8e8e8_1141px,#333_1141px,#333_1143px,#444_1143px,#444_1338px,#e8e8e8_1338px,#e8e8e8_1339px,#333_1339px,#333_1341px,#777_1341px)] font-['Liberation_Sans',sans-serif] text-[11px] leading-[10px] text-white">
            <svg width="12" height="10" viewBox="0 0 12 10" className="shrink-0 bg-[#aaa]"><path d="M1 5L11 0V10Z" fill="#222" /></svg>
            <div className="flex pl-[80px]">
              {["'06/06","'06/20","'07/04","'07/18","'08/01","'08/15","'08/29"].map((t) => (
                <span key={t} className="w-[197.8px] shrink-0">{t}</span>
              ))}
            </div>
          </div>
          <div className="h-[14px] shrink-0 w-[1354px] flex items-center bg-[#d2d2d2]">
            <svg width="10" height="10" viewBox="0 0 10 10" className="ml-[3px]"><circle cx="5" cy="5" r="5" fill="#666" /><path d="M2.5 6.5L5 3L7.5 6.5Z" fill="#fff" /></svg>
            <svg width="10" height="10" viewBox="0 0 10 10" className="ml-[4px]"><circle cx="5" cy="5" r="5" fill="#666" /><path d="M2.5 3.5L5 7L7.5 3.5Z" fill="#fff" /></svg>
            <div className="ml-[4px] flex-1 h-[4px] bg-[radial-gradient(circle,#777_1px,transparent_1.4px)] bg-[length:9px_4px]" />
          </div>
          <div className="h-[30px] shrink-0 flex items-end bg-[linear-gradient(to_bottom,#ececec,#d8d8d8)] text-[12px] tracking-[0.2px] font-['Liberation_Sans',sans-serif] font-bold text-[#222] border-l border-[#bbb]">
            <div className="w-[54px] h-[22px] pl-[7px] leading-[22px] rounded-t-[8px] bg-[#dadada] border-t border-[#bbb]">Orders</div>
            <div className="w-[36px] h-[22px] pl-[6px] leading-[22px] rounded-tr-[10px] rounded-tl-[6px] bg-[#f0f0f0] border-t border-r border-[#bbb]">Log</div>
            <div className="w-[53px] h-[22px] pl-[5px] leading-[22px] rounded-tr-[10px] rounded-tl-[6px] bg-[#f0f0f0] border-t border-r border-[#bbb]">Trades</div>
            <div className="w-[63px] h-[22px] pl-[6px] leading-[22px] rounded-tr-[10px] rounded-tl-[6px] bg-[#f0f0f0] border-t border-r border-[#bbb]">Portfolio</div>
            <div className="ml-auto mr-[5px] self-start mt-[3px] flex items-center gap-[3px] pr-[1px]">
              <svg width="11" height="12" viewBox="0 0 11 12"><circle cx="5.5" cy="6" r="5" fill="#6a7070" /><path d="M3 1L6 5L9 3" stroke="#f0f0f0" fill="none" strokeWidth="1.2" /></svg>
              <svg width="12" height="12" viewBox="0 0 12 12"><circle cx="6" cy="6" r="5.5" fill="#aeb6c4" stroke="#7a8a9c" /><circle cx="6" cy="6" r="3" fill="#8a9cc0" /></svg>
            </div>
          </div>
          <div className="h-[16px] shrink-0 w-[1354px] flex bg-[#c8c8c8] text-[13px] leading-[16px] text-[#222] border-l border-[#bbb]">
            {headers.map(([t, w]) => <span key={t} className={`${w} text-center whitespace-nowrap`}>{t}</span>)}
          </div>
          <div className="flex-1 border-l border-[#bbb] shadow-[inset_0_-2px_0_#333]" />
        </div>
      </div>
      <Taskbar />
    </div>
  );
}
